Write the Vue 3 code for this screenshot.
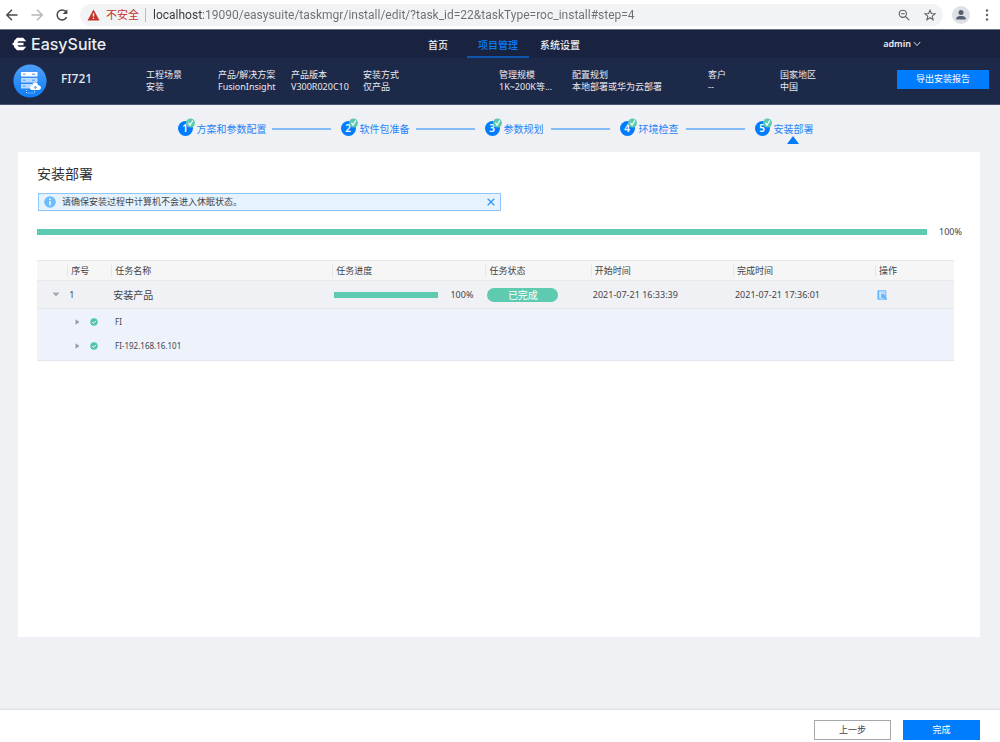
<script setup>
import { ref } from 'vue'

const address = ref('localhost:19090/easysuite/taskmgr/install/edit/?task_id=22&taskType=roc_install#step=4')
const noticeOpen = ref(true)

const nav = [
  { label: '首页', active: false },
  { label: '项目管理', active: true },
  { label: '系统设置', active: false },
]

const info = [
  { label: '工程场景', value: '安装' },
  { label: '产品/解决方案', value: 'FusionInsight' },
  { label: '产品版本', value: 'V300R020C10' },
  { label: '安装方式', value: '仅产品' },
  { label: '管理规模', value: '1K~200K等...' },
  { label: '配置规划', value: '本地部署或华为云部署' },
  { label: '客户', value: '--' },
  { label: '国家地区', value: '中国' },
]

const steps = ['方案和参数配置', '软件包准备', '参数规划', '环境检查', '安装部署']
const headings = ['序号', '任务名称', '任务进度', '任务状态', '开始时间', '完成时间', '操作']
const nodes = ['FI', 'FI-192.168.16.101']
const progress = 100
</script>

<template>
  <div class="page">
    <div class="browser">
      <button class="tool" aria-label="后退">
        <svg width="14" height="14" viewBox="0 0 14 14" fill="none" stroke="#45494d" stroke-width="1.4"><path d="M12.5 7H2M7 1.8 1.8 7 7 12.2" /></svg>
      </button>
      <button class="tool" aria-label="前进">
        <svg width="14" height="14" viewBox="0 0 14 14" fill="none" stroke="#b4b6b9" stroke-width="1.4"><path d="M1.5 7H12M7 1.8 12.2 7 7 12.2" /></svg>
      </button>
      <button class="tool" aria-label="刷新">
        <svg width="14" height="14" viewBox="0 0 14 14"><path d="M11.6 9.2A5 5 0 1 1 10.9 3.6" fill="none" stroke="#45494d" stroke-width="1.5" /><path d="M12.4 1.2V6H7.6Z" fill="#45494d" /></svg>
      </button>
      <div class="address">
        <svg width="13" height="12" viewBox="0 0 13 12"><path d="M6.500 .5 12.500 11.500H.5Z" fill="#c5352b" /><path d="M6.500 4.300V7.600M6.500 8.700V10" stroke="#fff" stroke-width="1.300" /></svg>
        <span class="unsafe">不安全</span>
        <input v-model="address" class="url" type="text" aria-label="地址" />
        <button class="tool" aria-label="缩放">
          <svg width="12" height="12" viewBox="0 0 12 12" fill="none" stroke="#5f6368" stroke-width="1.1"><circle cx="4.800" cy="4.800" r="3.600" /><path d="M7.500 7.500 11.200 11.200M3 4.800H6.600" /></svg>
        </button>
        <button class="tool" aria-label="收藏">
          <svg width="12" height="12" viewBox="0 0 12 12" fill="none" stroke="#5f6368" stroke-width="1.100"><path d="M6 1.200 7.400 4.500 11 4.800 8.200 7.100 9.100 10.700 6 8.700 2.900 10.700 3.800 7.100 1 4.800 4.600 4.500Z" /></svg>
        </button>
      </div>
      <button class="tool avatar" aria-label="用户">
        <svg width="18" height="18" viewBox="0 0 18 18"><circle cx="9" cy="9" r="9" fill="#dde1e7" /><circle cx="9" cy="6.500" r="2.500" fill="#55606f" /><path d="M4.300 13.600V12.200C4.300 10.600 7.300 10 9 10S13.700 10.600 13.700 12.200V13.600Z" fill="#55606f" /></svg>
      </button>
      <button class="tool" aria-label="更多">
        <svg width="4" height="12" viewBox="0 0 4 12" fill="#5f6368"><circle cx="2" cy="1.500" r="1.200" /><circle cx="2" cy="6" r="1.200" /><circle cx="2" cy="10.500" r="1.200" /></svg>
      </button>
    </div>

    <header class="topbar">
      <div class="brand">
        <svg width="15" height="14" viewBox="0 0 15 14"><path d="M5 .8H11.200L14.200 4.300H7.400C6.400 4.300 5.800 4.800 5.500 5.700H11.500V8.300H5.500C5.800 9.200 6.400 9.700 7.400 9.700H14.200L11.200 13.200H5L2 10V8.300H.6V5.700H2V4Z" fill="#fff" /></svg>
        <span>EasySuite</span>
      </div>
      <nav class="nav">
        <a v-for="n in nav" :key="n.label" href="#" :class="{ active: n.active }">{{ n.label }}</a>
      </nav>
      <button class="user">
        admin
        <svg width="8" height="6" viewBox="0 0 8 6" fill="none" stroke="#d5d9e2" stroke-width="1"><path d="M.8 1 4 4.600 7.200 1" /></svg>
      </button>
    </header>

    <section class="project">
      <svg class="project-icon" width="34" height="34" viewBox="0 0 34 34">
        <defs><linearGradient id="disc" x1="0" y1="0" x2="0" y2="1"><stop offset="0" stop-color="#4fa0fa" /><stop offset="1" stop-color="#0b7cf8" /></linearGradient></defs>
        <circle cx="17" cy="17" r="16.600" fill="url(#disc)" />
        <path d="M8 8H24.500V12.500H8Z" fill="#fff" />
        <path d="M8 14H24.500V18.500H8ZM8 20H19V24.500H8Z" fill="#b9d9ff" />
        <path d="M10 10.200H12.500M19 10.200H22.500M10 16.200H12.500M19 16.200H22M10 22.200H12.500" stroke="#4398f8" stroke-width="1" />
        <path d="M13.500 26V29H21.500V27" fill="none" stroke="#b7d8ff" stroke-width="1" stroke-dasharray="1 1" />
        <path d="M19.500 26C16.300 26 16.200 21.800 19.100 21.400C19.500 17.500 24.700 17.500 25.200 21.200C28.900 21.400 28.700 26 25.500 26Z" fill="#fff" />
        <path d="M22.300 25V22.300M21 23.600 22.300 22.300 23.600 23.600" fill="none" stroke="#3391f8" stroke-width="1" />
      </svg>
      <h1>FI721</h1>
      <dl class="info">
        <div v-for="i in info" :key="i.label">
          <dt>{{ i.label }}</dt>
          <dd>{{ i.value }}</dd>
        </div>
      </dl>
      <button class="primary export">导出安装报告</button>
    </section>

    <ol class="steps">
      <li v-for="(s, i) in steps" :key="s" :class="{ current: i === steps.length - 1 }">
        <span class="number">{{ i + 1 }}
          <svg class="done" width="9" height="10" viewBox="0 0 9 10"><circle cx="4.500" cy="5" r="4.500" fill="#5ecbb1" /><path d="M2.500 4.800 4 7.200 6.800 2.500" fill="none" stroke="#fff" stroke-width="1.200" /></svg>
        </span>
        <span class="step-name">{{ s }}
          <svg v-if="i === steps.length - 1" class="pointer" width="12" height="8" viewBox="0 0 12 8"><path d="M6 0 12 8H0Z" fill="#007dff" /></svg>
        </span>
      </li>
    </ol>

    <main class="card">
      <h2>安装部署</h2>
      <div v-if="noticeOpen" class="notice">
        <svg width="12" height="12" viewBox="0 0 12 12"><circle cx="6" cy="6" r="5.800" fill="#6cbcff" /><path d="M6 2.500V4M6 5V9.500" stroke="#fff" stroke-width="1.400" /></svg>
        <span>请确保安装过程中计算机不会进入休眠状态。</span>
        <button class="tool" aria-label="关闭" @click="noticeOpen = false">
          <svg width="8" height="8" viewBox="0 0 8 8" stroke="#2e97f7" stroke-width="1.300"><path d="M.7 .7 7.300 7.300M7.300 .7 .7 7.300" /></svg>
        </button>
      </div>

      <div class="overall">
        <div class="track"><div class="fill" :style="{ width: progress + '%' }"></div></div>
        <span>{{ progress }}%</span>
      </div>

      <table class="tasks">
        <colgroup>
          <col class="c-toggle" /><col class="c-index" /><col class="c-name" /><col class="c-progress" />
          <col class="c-status" /><col class="c-start" /><col class="c-end" /><col class="c-action" />
        </colgroup>
        <thead>
          <tr>
            <td></td>
            <th v-for="h in headings" :key="h" scope="col"><span>{{ h }}</span></th>
          </tr>
        </thead>
        <tbody>
          <tr class="task">
            <td class="toggle">
              <button class="tool" aria-label="收起"><svg width="8" height="5" viewBox="0 0 8 5"><path d="M.5 .5H7.500L4 4.500Z" fill="#a3a9b5" /></svg></button>
            </td>
            <td>1</td>
            <td class="task-name">安装产品</td>
            <td>
              <div class="row-progress">
                <div class="track"><div class="fill" :style="{ width: progress + '%' }"></div></div>
                <span>{{ progress }}%</span>
              </div>
            </td>
            <td><span class="pill">已完成</span></td>
            <td>2021-07-21 16:33:39</td>
            <td>2021-07-21 17:36:01</td>
            <td>
              <button class="tool" aria-label="查看日志">
                <svg width="10" height="10" viewBox="0 0 10 10"><path d="M1 .8H8.800V9.200H1Z" fill="#cfe7ff" stroke="#69b3fb" stroke-width="1" /><path d="M1.500 .5V9.500" stroke="#69b3fb" stroke-width="1.300" /><path d="M4 3H7.500" stroke="#8cc5fd" stroke-width=".8" /><circle cx="6" cy="6" r="1.700" fill="#7bbcfc" stroke="#4da5fb" stroke-width=".8" /><path d="M7.200 7.200 9.500 9.500" stroke="#4da5fb" stroke-width="1.200" /></svg>
              </button>
            </td>
          </tr>
          <tr class="children">
            <td colspan="8">
              <ul>
                <li v-for="n in nodes" :key="n">
                  <button class="tool" aria-label="展开"><svg width="5" height="6" viewBox="0 0 5 6"><path d="M.5 .2V5.800L4.500 3Z" fill="#979daa" /></svg></button>
                  <svg width="8" height="8" viewBox="0 0 8 8"><circle cx="4" cy="4" r="3.700" fill="#50c5a9" /><path d="M2.200 4 3.600 5.300 6 2.900" fill="none" stroke="#fff" stroke-width="1" /></svg>
                  <span>{{ n }}</span>
                </li>
              </ul>
            </td>
          </tr>
        </tbody>
      </table>
    </main>

    <footer class="actions">
      <button class="secondary">上一步</button>
      <button class="primary">完成</button>
    </footer>
  </div>
</template>

<style>
body {
  background: #eff1f5;
}
</style>

<style scoped>
* {
  box-sizing: border-box;
}
.page {
  display: flex;
  flex-direction: column;
  min-height: 100vh;
  background: #eff1f5;
  color: #3f4349;
  font-family: "Noto Sans", "Noto Sans CJK SC", sans-serif;
  font-size: 9px;
  line-height: 12px;
}
svg {
  display: block;
  flex: none;
}
h1,
h2,
dl,
dd,
ol,
ul {
  margin: 0;
  padding: 0;
  font-weight: 400;
  list-style: none;
}
button {
  padding: 0;
  border: 0;
  background: none;
  color: inherit;
  font: inherit;
  cursor: pointer;
}
.browser {
  display: flex;
  align-items: center;
  gap: 11px;
  height: 29px;
  padding: 0 11px 0 5px;
  background: #fff;
}
.address {
  display: flex;
  flex: 1;
  align-items: center;
  height: 22px;
  margin-right: -2px;
  padding: 0 7px;
  border-radius: 11px;
  background: #f1f3f4;
}
.address .tool {
  margin-left: 14px;
}
.avatar {
  margin-right: 4px;
}
.unsafe {
  margin: 0 6px;
  color: #c5352b;
  font-size: 11px;
}
.url {
  flex: 1;
  min-width: 0;
  padding: 0 0 0 7px;
  border: 0;
  border-left: 1px solid #b9bcc0;
  outline: 0;
  background: linear-gradient(to right, #34373b 57px, #6b6f74 57px);
  background-clip: text;
  color: transparent;
  font-family: Roboto, sans-serif;
  font-size: 12px;
  line-height: 12px;
}
.topbar {
  display: grid;
  grid-template-columns: 1fr auto 1fr;
  align-items: stretch;
  height: 29px;
  padding-left: 12px;
  border-top: 1px solid #6d7486;
  background: #19233f;
  color: #eceef3;
}
.brand {
  display: flex;
  align-items: center;
  gap: 4px;
  font-family: Inter, sans-serif;
  font-size: 16px;
  font-weight: 500;
}
.nav {
  display: flex;
  margin-right: 4px;
}
.nav a {
  padding: 9px 11px 0;
  border-bottom: 2px solid transparent;
  color: inherit;
  font-size: 10px;
  font-weight: 500;
  text-decoration: none;
}
.nav a:first-child {
  margin-right: 8px;
}
.nav .active {
  border-color: #0d56ad;
  color: #0a7af5;
}
.user {
  display: flex;
  justify-self: end;
  align-items: center;
  gap: 2px;
  margin-right: 79px;
  font-size: 9px;
  font-weight: 600;
}
.project {
  display: flex;
  align-items: center;
  height: 47px;
  padding: 0 11px 0 13px;
  border-bottom: 1px solid #4a546e;
  background: #1d2949;
  color: #e8eaf0;
}
.project h1 {
  width: 85px;
  margin: 0 0 5px 14px;
  font-size: 12px;
  font-weight: 500;
  line-height: 16px;
}
.info {
  display: grid;
  flex: 1;
  grid-template-columns: 72fr 73fr 72fr 136fr 73fr 136fr 72fr 117fr;
}
.info div {
  min-width: 0;
  white-space: nowrap;
}
.primary {
  background: #007dff;
  color: #fff;
}
.export {
  width: 92px;
  height: 19px;
  margin-bottom: 4px;
}
.steps {
  display: grid;
  grid-template-columns: 163px 144px 135px 135px 60px;
  align-items: center;
  justify-content: center;
  height: 47px;
  padding-right: 8px;
  color: #1f85f5;
  font-size: 10px;
}
.steps li {
  display: flex;
  align-items: center;
  gap: 4px;
  white-space: nowrap;
}
.steps li:not(.current)::after {
  width: 59px;
  height: 2px;
  margin: 0 10px 0 auto;
  background: #85bdfb;
  content: "";
}
.number {
  position: relative;
  flex: none;
  width: 15px;
  height: 15px;
  border-radius: 50%;
  background: #007dff;
  color: #fff;
  font-weight: 600;
  line-height: 15px;
  text-align: center;
}
.done {
  position: absolute;
  top: -3px;
  right: -2px;
}
.step-name {
  position: relative;
}
.pointer {
  position: absolute;
  top: 13px;
  left: calc(50% - 7px);
}
.card {
  flex: 1;
  margin: 0 20px 73px 18px;
  padding: 13px 18px 20px 19px;
  background: #fff;
}
.card h2 {
  color: #2f3338;
  font-size: 14px;
  line-height: 18px;
}
.notice {
  display: flex;
  align-items: center;
  gap: 6px;
  width: 50%;
  height: 18px;
  margin: 10px 0 0 1px;
  padding: 0 5px;
  border: 1px solid #8cc8fd;
  background: #e6f3ff;
}
.notice .tool {
  margin-left: auto;
}
.overall {
  display: flex;
  align-items: center;
  gap: 12px;
  margin-top: 15px;
}
.track {
  flex: 1;
  height: 6px;
  background: #e3e6ec;
}
.fill {
  height: 100%;
  background: #5ecbb1;
}
.tasks {
  width: calc(100% - 8px);
  margin-top: 22px;
  border-collapse: collapse;
  table-layout: fixed;
}
.c-toggle { width: 3.3%; }
.c-index { width: 4.8%; }
.c-name { width: 24.1%; }
.c-progress { width: 16.7%; }
.c-status { width: 11.5%; }
.c-start { width: 15.5%; }
.c-end { width: 15.5%; }
.c-action { width: 8.6%; }
.tasks thead tr {
  height: 20px;
  border-top: 1px solid #e7e8ea;
  border-bottom: 1px solid #e7e8ea;
  background: #f6f6f6;
}
.tasks th {
  padding: 0;
  font-weight: 400;
  text-align: left;
}
.tasks th span {
  display: block;
  padding-left: 3px;
  border-left: 1px solid #e4e5e7;
}
.task {
  height: 28px;
  border-bottom: 1px solid #e5e7ea;
  background: #eff1f4;
}
.task td {
  padding: 0 0 0 2px;
}
.task td.toggle {
  padding-left: 15px;
}
.task .tool {
  display: block;
}
.task td.task-name {
  font-size: 10px;
}
.row-progress {
  display: flex;
  align-items: center;
  gap: 12px;
  padding-right: 12px;
}
.pill {
  display: block;
  width: 71px;
  border-radius: 7px;
  background: #5ecbb1;
  color: #fff;
  font-size: 10px;
  line-height: 14px;
  text-align: center;
}
.children {
  border-bottom: 1px solid #e3e6ec;
  background: #eef2fb;
}
.children td {
  padding: 1px 0 2px 38px;
}
.children li {
  display: flex;
  align-items: center;
  gap: 10px;
  height: 24px;
}
.children li span {
  margin-left: 7px;
  font-size: 8px;
}
.actions {
  display: flex;
  justify-content: flex-end;
  gap: 12px;
  padding: 10px 20px 2px;
  background: #fff;
  box-shadow: 0 -1px 2px #d9dbdf;
}
.actions button {
  width: 77px;
  height: 20px;
}
.secondary {
  border: 1px solid #a6a8ab;
}
</style>
